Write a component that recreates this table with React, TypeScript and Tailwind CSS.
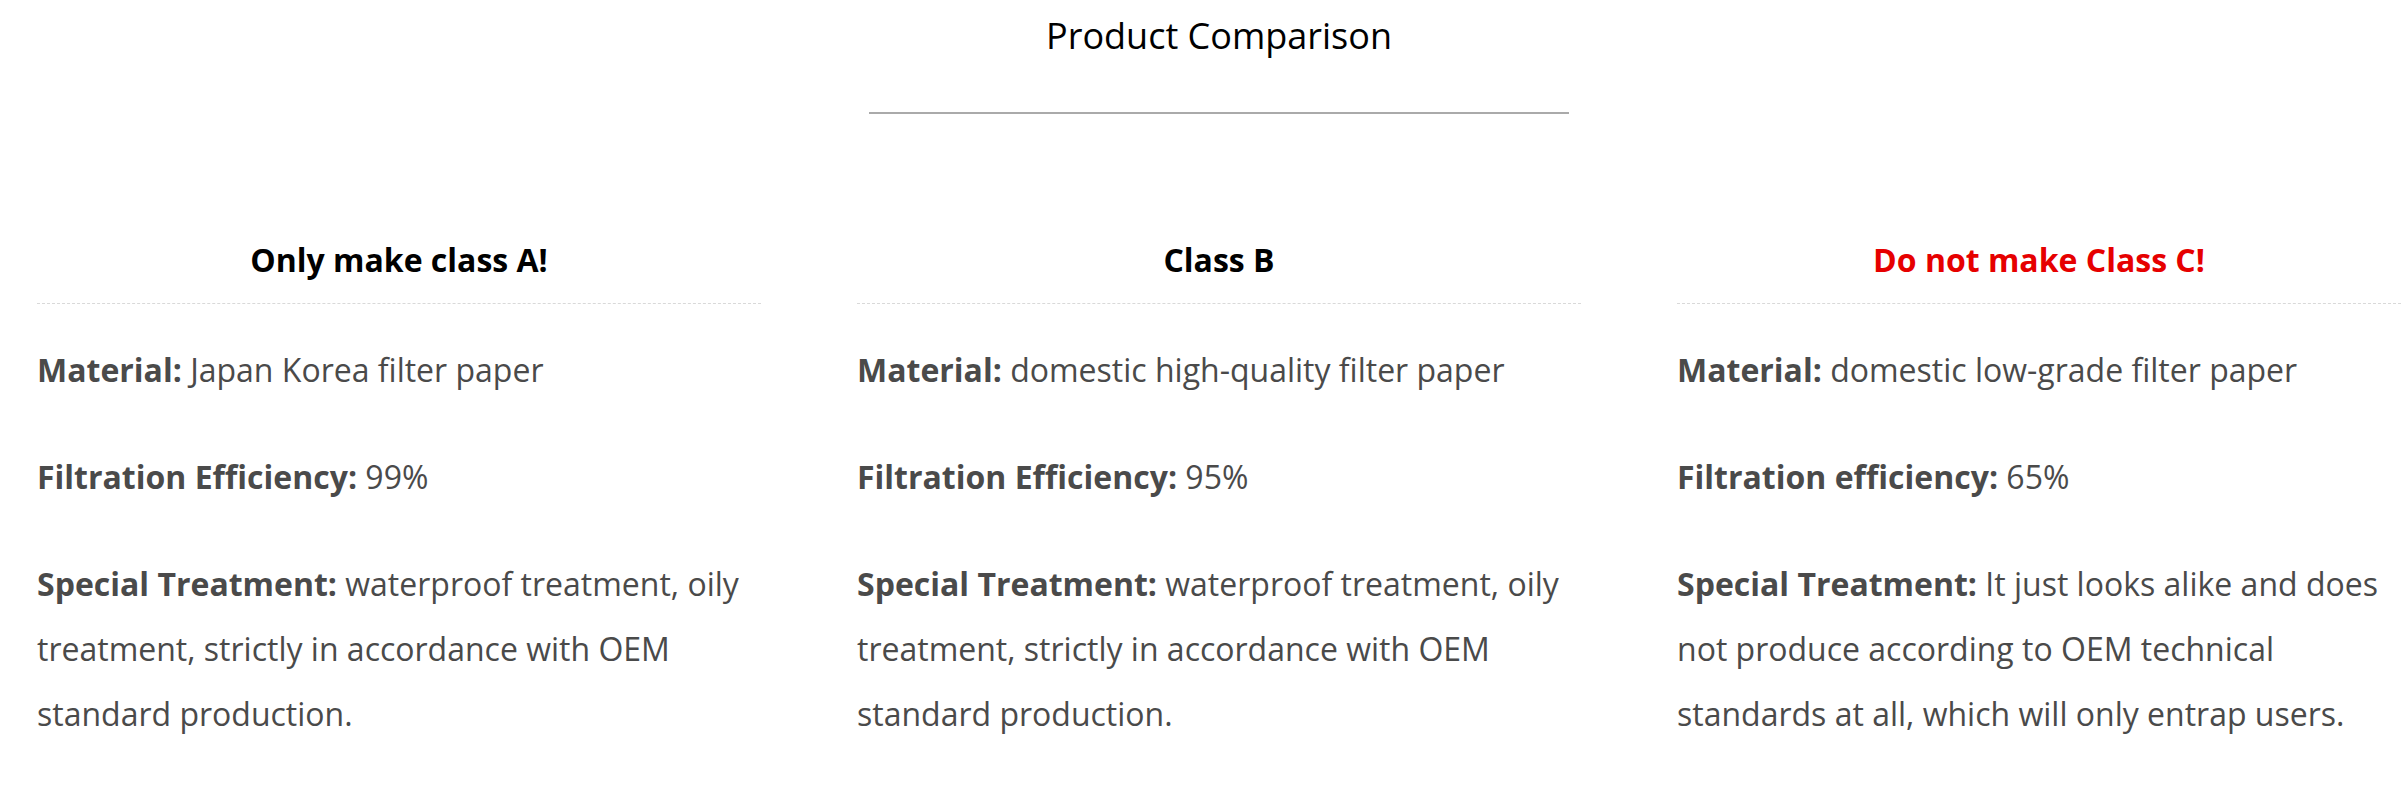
import React from 'react';

type Row = { label: string; text: string };
type Col = { title: string; red?: boolean; rows: Row[] };

const cols: Col[] = [
  {
    title: 'Only make class A!',
    rows: [
      { label: 'Material:', text: 'Japan Korea filter paper' },
      { label: 'Filtration Efficiency:', text: '99%' },
      { label: 'Special Treatment:', text: 'waterproof treatment, oily treatment, strictly in accordance with OEM standard production.' },
    ],
  },
  {
    title: 'Class B',
    rows: [
      { label: 'Material:', text: 'domestic high-quality filter paper' },
      { label: 'Filtration Efficiency:', text: '95%' },
      { label: 'Special Treatment:', text: 'waterproof treatment, oily treatment, strictly in accordance with OEM standard production.' },
    ],
  },
  {
    title: 'Do not make Class C!',
    red: true,
    rows: [
      { label: 'Material:', text: 'domestic low-grade filter paper' },
      { label: 'Filtration efficiency:', text: '65%' },
      { label: 'Special Treatment:', text: 'It just looks alike and does not produce according to OEM technical standards at all, which will only entrap users.' },
    ],
  },
];

export default function App() {
  return (
    <div className="w-[2402px] h-[798px] overflow-hidden bg-white font-['Open_Sans',sans-serif]">
      <div className="w-[2438px] px-[37px]">
        {/* heading */}
        <div className="flex flex-col items-center">
          <h2 className="mt-[13px] text-[36px] leading-[46px] text-black">Product Comparison</h2>
          <div className="mt-[53px] w-[700px] h-[2px] bg-[#aaaaaa]" />
        </div>

        {/* columns */}
        <div className="grid grid-cols-3 gap-x-[96px] mt-[113px]">
          {cols.map((c) => (
            <div key={c.title}>
              <div className="border-b border-dashed border-[#d9d9d9] pb-[10px]">
                <h3 className={`text-center font-bold text-[32px] leading-[66px] ${c.red ? 'text-[#e60000]' : 'text-black'}`}>
                  {c.title}
                </h3>
              </div>
              <div className="mt-[33px] flex flex-col gap-[42px] text-[32px] leading-[65px] text-[#4a4a4a]">
                {c.rows.map((r) => (
                  <p key={r.label}>
                    <b className="font-bold">{r.label}</b> {r.text}
                  </p>
                ))}
              </div>
            </div>
          ))}
        </div>
      </div>
    </div>
  );
}
